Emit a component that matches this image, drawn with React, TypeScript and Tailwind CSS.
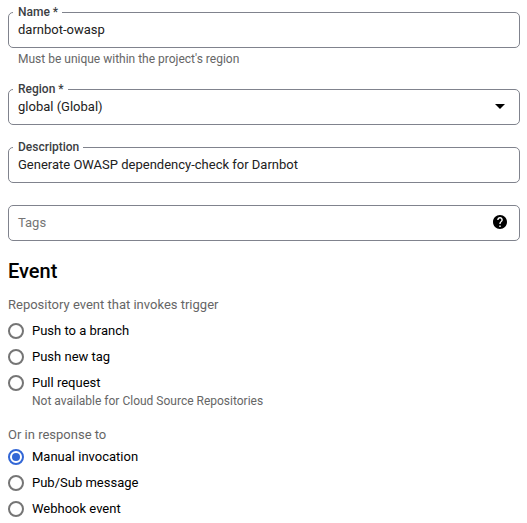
import React from 'react';

function Field({ label, value, children }: { label?: string; value: string; children?: React.ReactNode }) {
  return (
    <div className="relative flex h-9 items-center justify-between rounded-[5px] border border-[#80838d] px-[9px]">
      {label && (
        <span className="absolute -top-[9px] left-1 bg-white pr-1 pl-[5px] text-[12px] leading-4 font-medium whitespace-nowrap text-[#3c4043]">{label}</span>
      )}
      <span className={`text-[13px] leading-5 ${label ? 'text-[#212121]' : 'text-[#757575]'}`}>{value}</span>
      {children}
    </div>
  );
}

function Radio({ label, checked }: { label: string; checked?: boolean }) {
  return (
    <div className="flex h-[26px] items-center gap-2">
      <span className={`flex size-4 items-center justify-center rounded-full border-2 ${checked ? 'border-[#3367d6]' : 'border-[#757575]'}`}>
        {checked && <span className="size-2 rounded-full bg-[#3367d6]" />}
      </span>
      <span className="text-[13px] leading-5 text-black">{label}</span>
    </div>
  );
}

export default function App() {
  return (
    <div className="h-[523px] w-[527px] overflow-hidden bg-white pt-3 pr-[7px] pl-2 font-[Roboto,sans-serif]">
      <Field label="Name *" value="darnbot-owasp" />
      <p className="mt-0.5 pl-[10px] text-[12px] leading-[18px] text-[#666666]">Must be unique within the project's region</p>
      <div className="mt-[21px]">
        <Field label="Region *" value="global (Global)">
          <span className="mr-[5px] mb-px border-x-[5px] border-t-[5px] border-x-transparent border-t-black" />
        </Field>
      </div>
      <div className="mt-[22px]">
        <Field label="Description" value="Generate OWASP dependency-check for Darnbot" />
      </div>
      <div className="mt-[22px]">
        <Field value="Tags">
          <svg className="mr-[3px] mb-[2px] size-[14px]" viewBox="2 2 20 20"><path d="M12 2C6.48 2 2 6.48 2 12s4.48 10 10 10 10-4.48 10-10S17.52 2 12 2zm1 17h-2v-2h2v2zm2.07-7.75l-.9.92C13.45 12.9 13 13.5 13 15h-2v-.5c0-1.1.45-2.1 1.17-2.83l1.24-1.26c.37-.36.59-.86.59-1.41 0-1.1-.9-2-2-2s-2 .9-2 2H8c0-2.21 1.79-4 4-4s4 1.79 4 4c0 .88-.36 1.68-.93 2.25z" /></svg>
        </Field>
      </div>
      <h2 className="mt-[18px] text-[20px] leading-6 font-medium text-black">Event</h2>
      <p className="mt-3 text-[13px] leading-5 text-[#666666]">Repository event that invokes trigger</p>
      <div className="mt-[3px]">
        <Radio label="Push to a branch" />
        <Radio label="Push new tag" />
        <Radio label="Pull request" />
      </div>
      <p className="-mt-1 pl-6 text-[12px] leading-[18px] text-[#666666]">Not available for Cloud Source Repositories</p>
      <p className="mt-[15px] text-[13px] leading-5 text-[#666666]">Or in response to</p>
      <div className="-mt-px">
        <Radio label="Manual invocation" checked />
        <Radio label="Pub/Sub message" />
        <Radio label="Webhook event" />
      </div>
    </div>
  );
}
